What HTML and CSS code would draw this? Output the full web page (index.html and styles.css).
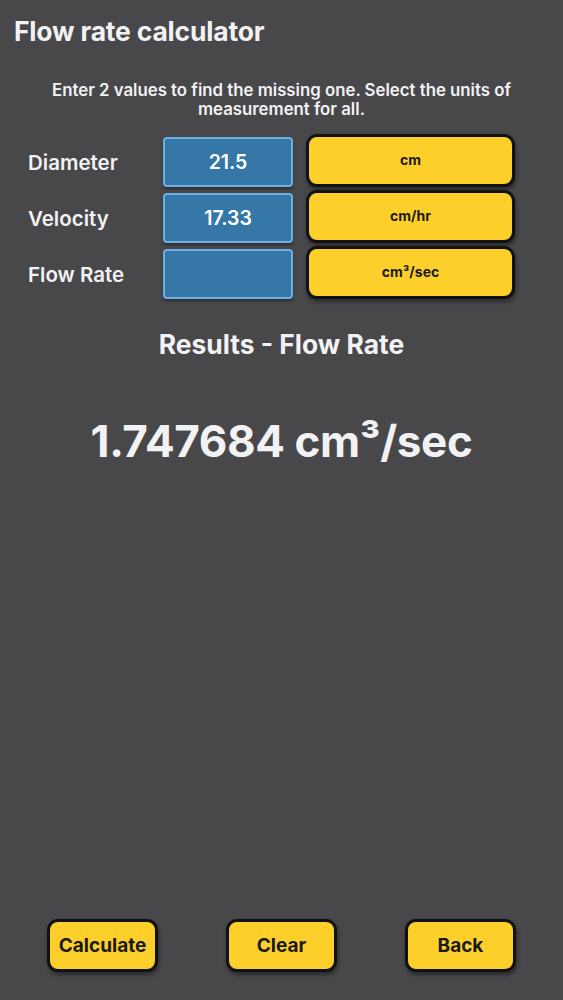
FILE: index.html
```html
<!DOCTYPE html>
<html lang="en">
  <head>
    <meta charset="UTF-8">
    <meta name="viewport" content="width=device-width, initial-scale=1.0">
    <title>Flow rate calculator</title>
    <link rel="stylesheet" href="styles.css">
  </head>
  <body>
    <div class="screen">
      <h1 class="title">Flow rate calculator</h1>
      <p class="hint">Enter 2 values to find the missing one. Select the units of measurement for all.</p>

      <div class="form">
        <label class="field-label">Diameter</label>
        <div class="value-box">21.5</div>
        <div class="unit-btn">cm</div>

        <label class="field-label">Velocity</label>
        <div class="value-box">17.33</div>
        <div class="unit-btn">cm/hr</div>

        <label class="field-label">Flow Rate</label>
        <div class="value-box"></div>
        <div class="unit-btn">cm³/sec</div>
      </div>

      <h2 class="results-title">Results - Flow Rate</h2>
      <div class="result">1.747684 cm³/sec</div>

      <footer class="actions">
        <button class="action-btn">Calculate</button>
        <button class="action-btn">Clear</button>
        <button class="action-btn">Back</button>
      </footer>
    </div>
  </body>
</html>
```

FILE: styles.css
```css
:root {
  --bg: #48474a;
  --text: #f2f2f4;
  --blue: #3577a7;
  --blue-border: #6cb0e3;
  --yellow: #fdcf2b;
}

html, body {
  margin: 0;
  padding: 0;
  background: var(--bg);
  color: var(--text);
  font-family: Inter, "Noto Sans", Arial, sans-serif;
}

.screen {
  min-height: 100vh;
  display: flex;
  flex-direction: column;
  box-sizing: border-box;
}

.title {
  margin: 14px 0 0 14px;
  font-size: 26.5px;
  font-weight: 700;
  line-height: 34px;
  letter-spacing: -0.2px;
}

.hint {
  margin: 33px 20px 0;
  text-align: center;
  font-size: 16.8px;
  font-weight: 600;
  line-height: 19px;
}

.form {
  display: grid;
  grid-template-columns: 122px 130px 209px;
  column-gap: 13px;
  row-gap: 3px;
  padding-left: 28px;
  margin-top: 15px;
  align-items: end;
}

.field-label {
  align-self: center;
  font-size: 20.5px;
  font-weight: 600;
  padding-top: 4px;
}

.value-box {
  height: 50px;
  box-sizing: border-box;
  border: 2px solid var(--blue-border);
  border-radius: 4px;
  background: var(--blue);
  box-shadow: 0 2px 3px rgba(0, 0, 0, 0.35);
  display: flex;
  align-items: center;
  justify-content: center;
  font-size: 19.5px;
  font-weight: 600;
  color: #fff;
}

.unit-btn {
  height: 53px;
  box-sizing: border-box;
  border: 3px solid #111;
  border-radius: 11px;
  background: var(--yellow);
  box-shadow: 1px 3px 4px rgba(0, 0, 0, 0.4);
  display: flex;
  align-items: center;
  justify-content: center;
  padding-bottom: 3px;
  font-size: 14px;
  font-weight: 700;
  color: #1a1a1a;
}

.results-title {
  margin: 29px 0 0;
  text-align: center;
  font-size: 26.4px;
  font-weight: 700;
}

.result {
  margin-top: 54px;
  text-align: center;
  font-size: 44px;
  font-weight: 700;
  letter-spacing: -0.4px;
}

.actions {
  margin-top: auto;
  display: flex;
  justify-content: space-between;
  padding: 0 47px 28px;
}

.action-btn {
  width: 111px;
  height: 53px;
  box-sizing: border-box;
  border: 3px solid #111;
  border-radius: 11px;
  background: var(--yellow);
  box-shadow: 1px 3px 4px rgba(0, 0, 0, 0.4);
  font-family: inherit;
  font-size: 19px;
  font-weight: 700;
  color: #1a1a1a;
  padding: 0;
}
```
